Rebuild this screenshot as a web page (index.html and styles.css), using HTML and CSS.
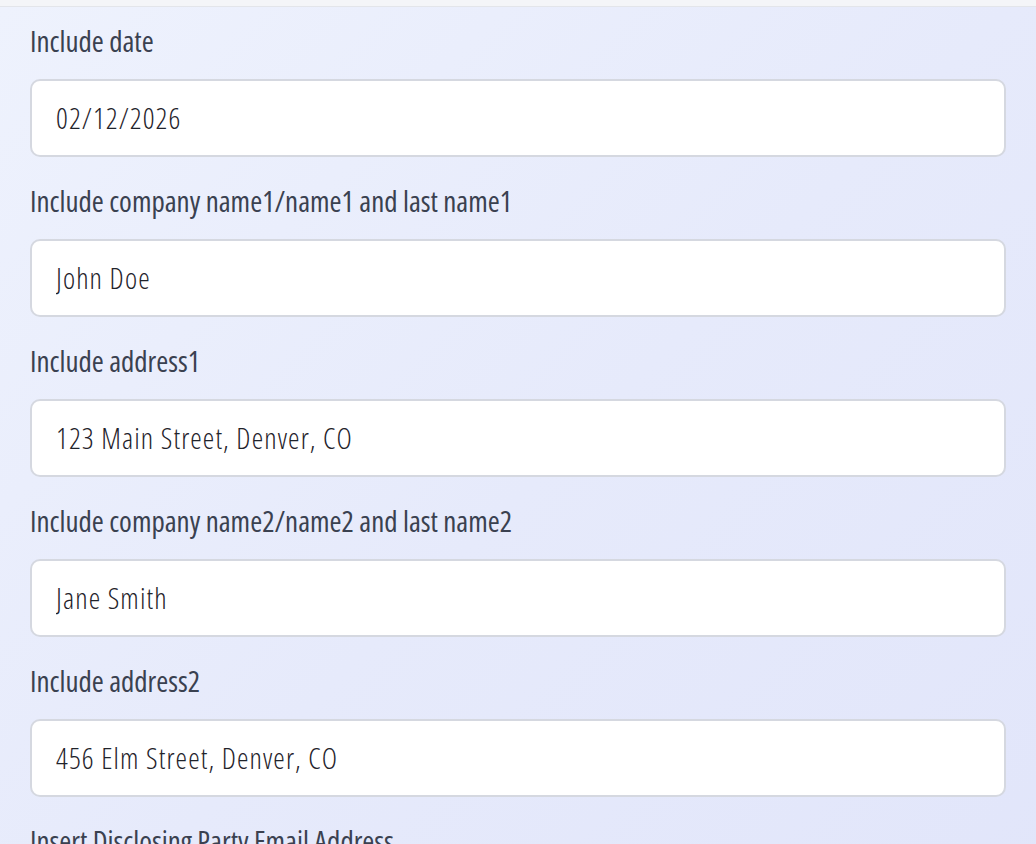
FILE: index.html
```html
<!DOCTYPE html>
<html lang="en">
<head>
<meta charset="utf-8">
<title>Form</title>
<link rel="stylesheet" href="styles.css">
</head>
<body>
<div class="topbar"></div>
<main class="panel">
  <div class="field">
    <label class="label" for="f1">Include date</label>
    <input class="input" id="f1" type="text" value="02/12/2026">
  </div>
  <div class="field">
    <label class="label" for="f2">Include company name1/name1 and last name1</label>
    <input class="input" id="f2" type="text" value="John Doe">
  </div>
  <div class="field">
    <label class="label" for="f3">Include address1</label>
    <input class="input" id="f3" type="text" value="123 Main Street, Denver, CO">
  </div>
  <div class="field">
    <label class="label" for="f4">Include company name2/name2 and last name2</label>
    <input class="input" id="f4" type="text" value="Jane Smith">
  </div>
  <div class="field">
    <label class="label" for="f5">Include address2</label>
    <input class="input" id="f5" type="text" value="456 Elm Street, Denver, CO">
  </div>
  <div class="field">
    <label class="label" for="f6">Insert Disclosing Party Email Address</label>
    <input class="input" id="f6" type="text" value="">
  </div>
</main>
</body>
</html>
```
FILE: styles.css
```css
html, body {
  margin: 0;
  padding: 0;
  height: 100%;
  overflow: hidden;
}
body {
  font-family: "Open Sans", "Liberation Sans", Arial, sans-serif;
  font-stretch: 75%;
  background: #e6eaf9;
}
.topbar {
  height: 6px;
  background: #f4f5f8;
  border-bottom: 1px solid #e3e5ea;
}
.panel {
  min-height: 100%;
  box-sizing: border-box;
  padding: 16px 30px 0 30px;
  background: linear-gradient(135deg, #eef2fd 0%, #e6eafb 50%, #e1e5fa 100%);
  display: flex;
  flex-direction: column;
}
.field {
  display: flex;
  flex-direction: column;
  gap: 20px;
  margin-bottom: 26px;
}
.label {
  display: block;
  font-size: 29px;
  font-weight: 400;
  line-height: 36px;
  color: #3a4150;
}
.input {
  box-sizing: border-box;
  width: 100%;
  height: 78px;
  margin: 0;
  padding: 0 24px 2px 24px;
  border: 2px solid #d5d8e0;
  border-radius: 10px;
  background: #ffffff;
  font-family: inherit;
  font-stretch: 75%;
  font-weight: 300;
  font-size: 29px;
  letter-spacing: 1.1px;
  color: #1f232b;
  outline: none;
}
```
